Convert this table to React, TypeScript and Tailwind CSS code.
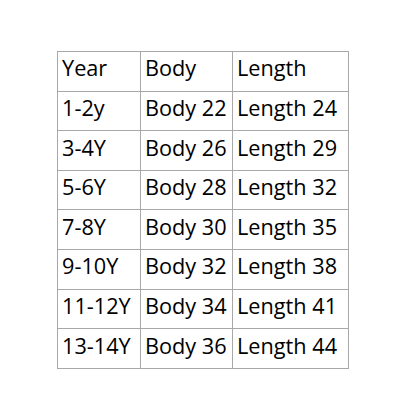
export default function App() {
  const rows = [
    ["Year", "Body", "Length"],
    ["1-2y", "Body 22", "Length 24"],
    ["3-4Y", "Body 26", "Length 29"],
    ["5-6Y", "Body 28", "Length 32"],
    ["7-8Y", "Body 30", "Length 35"],
    ["9-10Y", "Body 32", "Length 38"],
    ["11-12Y", "Body 34", "Length 41"],
    ["13-14Y", "Body 36", "Length 44"],
  ];
  return (
    <div className="w-[400px] h-[400px] bg-white pt-[51px] pl-[57px]" style={{ fontFamily: '"Open Sans", sans-serif' }}>
      <div className="grid grid-cols-[83px_92px_116px] w-fit border-l border-t border-[#a8a8a8] text-[21.7px] text-black">
        {rows.flatMap((r, i) =>
          r.map((c, j) => (
            <div key={i + "-" + j} className="h-[39.6px] border-r border-b border-[#a8a8a8] pl-[4px] pb-[6px] flex items-center leading-none whitespace-nowrap">
              {c}
            </div>
          ))
        )}
      </div>
    </div>
  );
}
